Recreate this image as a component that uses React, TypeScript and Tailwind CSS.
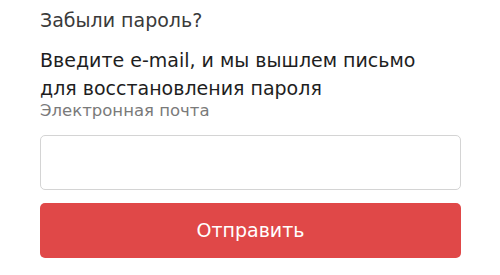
export default function App() {
  return (
    <div className="h-[275px] w-[500px] bg-white font-['DejaVu_Sans',sans-serif]">
      <div className="flex w-[461px] flex-col pl-10 pt-[8px]">
        <h2 className="text-[19px] leading-[24px] text-[#3a3a3a]">Забыли пароль?</h2>
        <p className="mt-[14px] text-[19px] leading-[28px] text-[#1e1e1e]">
          Введите e-mail, и мы вышлем письмо
          <br />
          для восстановления пароля
        </p>
        <label className="text-[16.5px] leading-[18px] text-[#7a7a7a]">
          Электронная почта
        </label>
        <input
          type="email"
          className="mt-[15px] h-[55px] w-full rounded-[5px] border border-[#d4d4d4] bg-white px-3 outline-none"
        />
        <button className="mt-[13px] h-[55px] w-full rounded-[5px] bg-[#e04848] text-[19px] text-white">
          Отправить
        </button>
      </div>
    </div>
  );
}
